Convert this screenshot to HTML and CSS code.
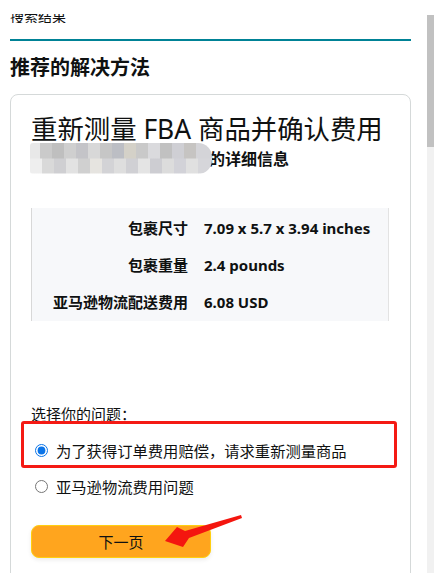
FILE: index.html
```html
<!DOCTYPE html>
<html lang="zh-CN">
<head>
    <meta charset="UTF-8">
    <meta name="viewport" content="width=device-width, initial-scale=1.0">
    <title>推荐的解决方法</title>
    <link rel="stylesheet" href="styles.css">
</head>
<body>

    <div class="page">
        <div class="crumb"><span>搜索结果</span></div>
        <div class="crumb-rule"></div>

        <h2 class="section-title">推荐的解决方法</h2>

        <div class="card">
            <h1 class="card-title">重新测量 FBA 商品并确认费用</h1>
            <div class="card-sub">
                <span class="mosaic"></span>
                <span class="sub-text">的详细信息</span>
            </div>

            <div class="details">
                <div class="detail-label">包裹尺寸</div>
                <div class="detail-value">7.09 x 5.7 x 3.94 inches</div>
                <div class="detail-label">包裹重量</div>
                <div class="detail-value">2.4 pounds</div>
                <div class="detail-label">亚马逊物流配送费用</div>
                <div class="detail-value">6.08 USD</div>
            </div>

            <div class="question">选择你的问题：</div>
            <label class="option">
                <input type="radio" name="issue" checked>
                <span>为了获得订单费用赔偿，请求重新测量商品</span>
            </label>
            <label class="option">
                <input type="radio" name="issue">
                <span>亚马逊物流费用问题</span>
            </label>

            <button class="btn-next" type="button">下一页</button>
        </div>
    </div>

    <!-- annotations drawn over the screenshot -->
    <div class="mark-box"></div>
    <svg class="mark-arrow" width="434" height="573" viewBox="0 0 434 573">
        <polygon points="165,541 177,527 185,531 241,515 242,518 189,538 183,547" fill="#f4160f"/>
    </svg>

    <div class="scrollbar"><div class="scroll-thumb"></div></div>

</body>
</html>
```

FILE: styles.css
```css
:root {
    --text-dark: #0f1111;
    --teal: #008296;
    --border: #d5d9d9;
    --table-bg: #f7f8fa;
}

body {
    margin: 0;
    height: 573px;
    overflow: hidden;
    position: relative;
    background: #ffffff;
    color: var(--text-dark);
    font-family: "Noto Sans", "Noto Sans CJK SC", sans-serif;
}

.page {
    padding: 14px 23px 0 10px;
}

/* breadcrumb, cut off by the scroll position */
.crumb {
    height: 9px;
    overflow: hidden;
    display: flex;
    align-items: flex-end;
    font-size: 14px;
    line-height: 15px;
}
.crumb span { display: block; margin-bottom: -1px; }

.crumb-rule {
    height: 2px;
    margin-top: 16px;
    background: var(--teal);
}

.section-title {
    margin: 14px 0 0 0;
    font-size: 20px;
    font-weight: 700;
    line-height: 26px;
}

.card {
    margin-top: 13px;
    border: 1px solid var(--border);
    border-radius: 8px;
    padding: 18px 21px 80px 20px;
}

.card-title {
    margin: 0;
    font-size: 26.4px;
    font-weight: 400;
    line-height: 32px;
    white-space: nowrap;
}

.card-sub {
    display: flex;
    align-items: center;
    height: 24px;
    margin-top: 1px;
    font-size: 16px;
    font-weight: 700;
}
.mosaic {
    flex-shrink: 0;
    width: 182px;
    height: 31px;
    margin-left: -1px;
    margin-right: -3px;
    border-radius: 3px 14px 14px 3px;
    background:
        linear-gradient(90deg, #e8e8e8 0 10px, #cacaca 10px 22px, #bfbfbf 22px 34px, #cfcfcf 34px 46px, #c4c4c8 46px 58px, #d8d8d8 58px 70px, #c6c6c6 70px 82px, #bcbec4 82px 94px, #d4d1c8 94px 106px, #c9c9c9 106px 118px, #dadadd 118px 130px, #c1c1c1 130px 142px, #cfcfd4 142px 154px, #c6c4c2 154px 166px, #d4d4d8 166px 182px) top / 100% 50% no-repeat,
        linear-gradient(90deg, #eeeeee 0 12px, #d9d9d9 12px 24px, #cfcfd2 24px 36px, #e2e2e2 36px 48px, #d0d0d0 48px 60px, #e6e4e0 60px 72px, #d3d3d6 72px 84px, #dedede 84px 96px, #d0d0d4 96px 108px, #e4e4e4 108px 120px, #cdcdd2 120px 132px, #dcdcdc 132px 144px, #d2d2d8 144px 156px, #e0e0e0 156px 168px, #d6d6da 168px 182px) bottom / 100% 50% no-repeat;
    filter: blur(0.6px);
}

.details {
    margin-top: 38px;
    padding: 1px 0;
    background: var(--table-bg);
    border-left: 1px solid #d8d8d8;
    border-right: 1px solid #e3e3e3;
    display: grid;
    grid-template-columns: 156px 1fr;
    grid-auto-rows: 37px;
    column-gap: 16px;
    align-items: center;
    font-size: 15px;
    font-weight: 700;
}
.detail-label { text-align: right; }

.question {
    margin-top: 83px;
    font-size: 15px;
    line-height: 20px;
}

.option {
    display: flex;
    align-items: center;
    height: 36px;
    font-size: 15.3px;
    cursor: pointer;
}
.option:first-of-type { margin-top: 8px; }
.option input {
    width: 13px;
    height: 13px;
    margin: 0 8px 0 4px;
    accent-color: #0a74e8;
}

.btn-next {
    display: block;
    margin-top: 21px;
    width: 180px;
    height: 33px;
    border: 1px solid #ffcf10;
    border-radius: 8px;
    background: #ffa51e;
    box-shadow: 0 2px 4px rgba(0, 0, 0, 0.08);
    color: var(--text-dark);
    font-family: inherit;
    font-size: 15px;
    cursor: pointer;
}

/* annotations */
.mark-box {
    position: absolute;
    left: 21px;
    top: 421px;
    width: 370px;
    height: 41px;
    border: 3px solid #f41a14;
    border-radius: 3px;
}
.mark-arrow {
    position: absolute;
    left: 0;
    top: 0;
    pointer-events: none;
}

.scrollbar {
    position: absolute;
    right: 0;
    top: 15px;
    bottom: 0;
    width: 7px;
    background: #f1f1f1;
}
.scroll-thumb {
    height: 132px;
    background: #c1c1c1;
}
```
